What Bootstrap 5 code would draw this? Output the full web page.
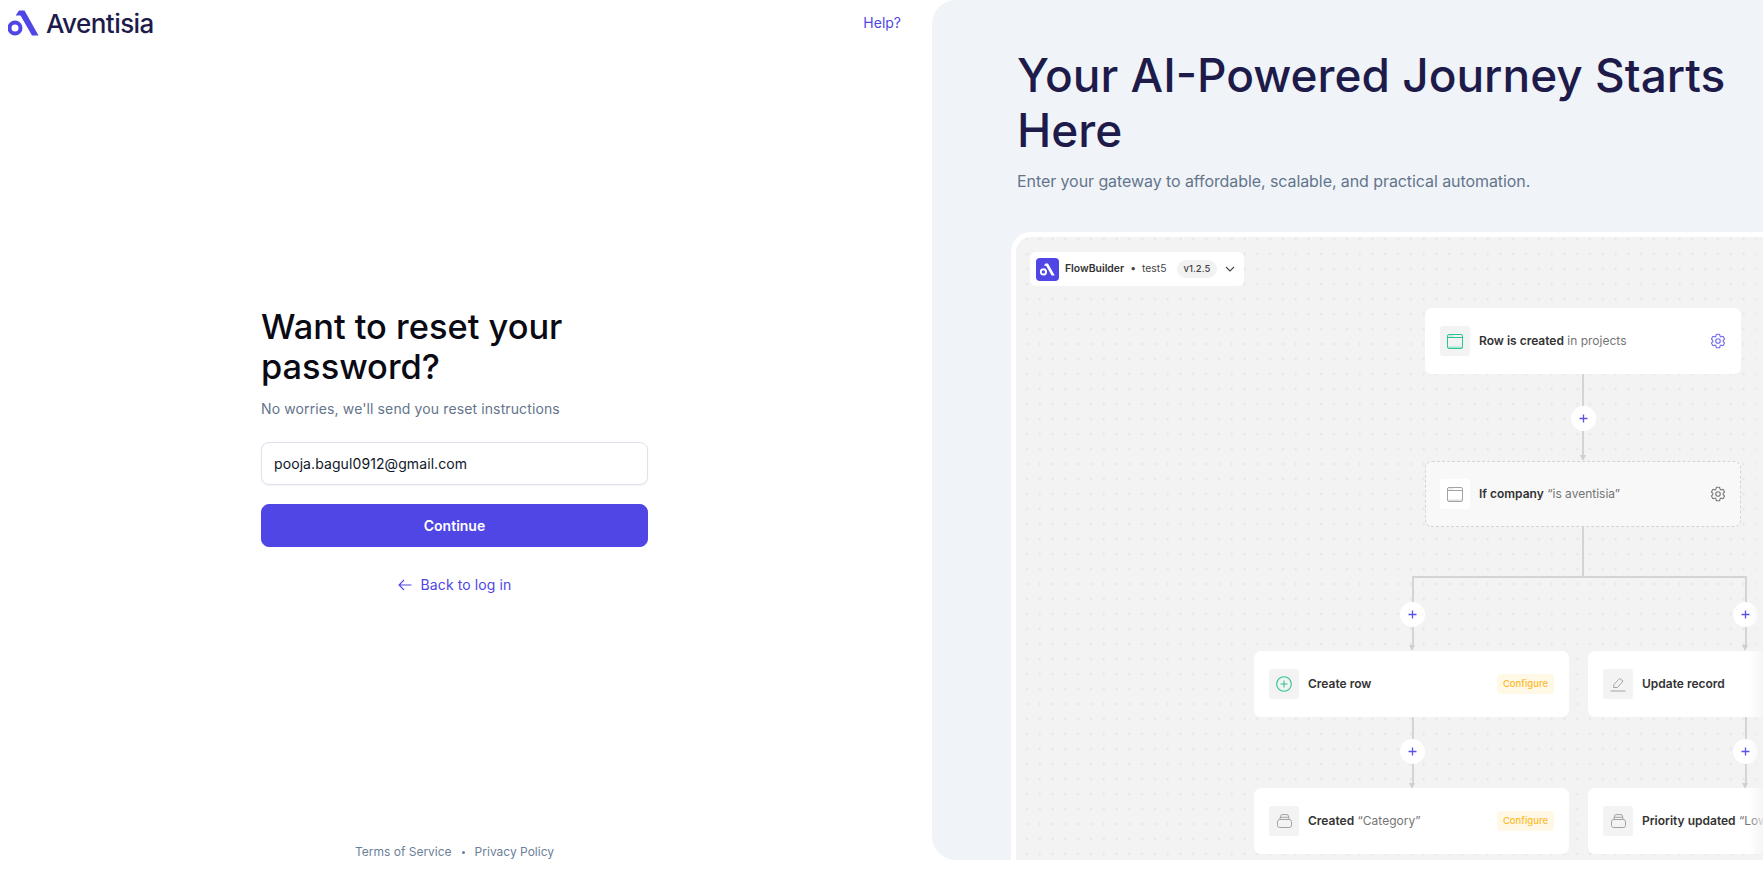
<!DOCTYPE html>
<html lang="en">

<head>
    <meta charset="UTF-8">
    <title>Reset password</title>
    <link href="https://cdn.jsdelivr.net/npm/bootstrap@5.3.3/dist/css/bootstrap.min.css" rel="stylesheet">
    <style>
        html, body {
            height: 872px;
            overflow: hidden;
        }

        body {
            font-family: Inter, "Liberation Sans", sans-serif;
            background: #fff;
        }

        .page-wrap {
            height: 860px;
        }

        .left-side {
            width: 932px;
            flex: none;
        }

        .top-bar {
            height: 46px;
            padding: 10px 31px 0 8px;
        }

        .brand-logo {
            margin-right: 7px;
        }

        .brand-name {
            font-size: 26px;
            line-height: 27px;
            font-weight: 500;
            color: #1e1b4b;
            letter-spacing: -.55px;
        }

        .help-link {
            font-size: 14px;
            line-height: 26px;
            color: #4f46e5;
            text-decoration: none;
        }

        .reset-form {
            width: 387px;
            margin-left: 261px;
            margin-top: 261px;
        }

        .reset-title {
            font-size: 34.4px;
            line-height: 40px;
            font-weight: 450;
            color: #0a0a14;
            margin-bottom: 12px;
        }

        .reset-sub {
            font-size: 14px;
            line-height: 20px;
            letter-spacing: .12px;
            color: #64748b;
            margin-bottom: 23px;
        }

        .reset-form .form-control {
            height: 43px;
            font-size: 14px;
            letter-spacing: .09px;
            padding: 0 12px;
            color: #0f172a;
            border: 1px solid #e0e0ef;
            border-radius: 8px;
            box-shadow: 0 1px 2px rgba(30, 27, 75, .06);
        }

        .btn-continue {
            height: 43px;
            margin-top: 19px;
            font-size: 14px;
            font-weight: 600;
            background: #4f46e5;
            border-color: #4f46e5;
            color: #fff;
            border-radius: 8px;
        }

        .back-link {
            margin-top: 28px;
            font-size: 14px;
            line-height: 20px;
            letter-spacing: .1px;
            color: #4f46e5;
            text-decoration: none;
            gap: 9px;
        }

        .foot-links {
            font-size: 12px;
            line-height: 16px;
            color: #6b7f99;
            gap: 10px;
        }

        .foot-links i {
            width: 3px;
            height: 3px;
            border-radius: 50%;
            background: #6b7f99;
        }

        .right-side {
            flex: 1;
            background: #f0f4f9;
            border-radius: 24px 0 0 24px;
            overflow: hidden;
            padding: 48px 0 0 85px;
        }

        .promo-title {
            font-size: 46px;
            line-height: 55px;
            font-weight: 450;
            color: #1e1b4b;
            margin: 0 0 11px;
        }

        .promo-sub {
            font-size: 16px;
            line-height: 24px;
            letter-spacing: -.08px;
            color: #64748b;
            margin: 0 0 39px;
        }

        .flow-frame {
            position: relative;
            margin-left: -6px;
            height: 640px;
            background-color: #f3f3f3;
            background-image: radial-gradient(#e6e6e6 1px, transparent 1.2px);
            background-size: 12.8px 15px;
            background-position: 4.6px -5.5px;
            border: 5px solid #fff;
            border-right: 0;
            border-bottom: 0;
            border-top-left-radius: 20px;
        }

        /* canvas: items below sit on the diagram at their own place */
        .flow-bar, .flow-node, .flow-line, .flow-plus, .flow-tip {
            position: absolute;
        }

        .flow-bar {
            left: 14px;
            top: 15px;
            width: 214px;
            height: 34px;
            background: #fff;
            border-radius: 6px;
            padding-left: 6px;
            font-size: 10.4px;
            color: #444;
        }

        .flow-bar b {
            font-weight: 600;
            color: #333;
        }

        .flow-logo {
            width: 23px;
            height: 23px;
            border-radius: 4px;
            background: #4f46e5;
            margin-right: 6px;
        }

        .flow-dot {
            margin: 0 6px;
        }

        .flow-ver {
            background: #f2f2f2;
            border-radius: 9px;
            padding: 2px 7px;
            margin-left: 10px;
            font-weight: 500;
            font-size: 9.5px;
        }

        .flow-node {
            width: 315px;
            height: 66px;
            background: #fff;
            border-radius: 7px;
            padding: 0 15px;
            font-size: 12px;
            color: #757575;
        }

        .flow-node b {
            font-weight: 600;
            color: #333;
        }

        .node-dashed {
            background: #f8f8f8;
            border: 1px dashed #d4d4d4;
            padding: 0 14px;
        }

        .node-icon {
            width: 30px;
            height: 30px;
            flex: none;
            background: #f3f3f3;
            border-radius: 3px;
            margin-right: 9px;
            color: #a3a3a3;
        }

        .node-dashed .node-icon {
            background: #fff;
        }

        .icon-green {
            color: #2cc38f;
        }

        .node-gear {
            margin-right: -1px;
        }

        .gear-blue {
            color: #6f68ee;
        }

        .gear-grey {
            color: #777;
        }

        .flow-config {
            background: #fff8e6;
            color: #fdbb2d;
            font-size: 9.5px;
            line-height: 20px;
            font-weight: 500;
            border-radius: 4px;
            padding: 0 6px;
        }

        .flow-line {
            background: #d4d4d4;
        }

        .flow-plus {
            width: 25px;
            height: 25px;
            border-radius: 50%;
            background: #fff;
        }

        .flow-tip {
            width: 0;
            height: 0;
            border: 3.5px solid transparent;
            border-top: 6px solid #cfcfcf;
            border-bottom: 0;
        }

        .flow-fade {
            position: absolute;
            top: 0;
            bottom: 0;
            right: 0;
            width: 14px;
            background: linear-gradient(90deg, rgba(243, 243, 243, 0), rgba(243, 243, 243, .8));
        }

        /* diagram places */
        .line-a { left: 566px; top: 137px; width: 2px; height: 82px; }
        .line-b { left: 566px; top: 290px; width: 2px; height: 50px; }
        .line-c { left: 396px; top: 339px; width: 335px; height: 1.5px; }
        .line-d { left: 396px; top: 339px; width: 1.5px; height: 70px; }
        .line-e { left: 729px; top: 339px; width: 1.5px; height: 70px; }
        .line-f { left: 396px; top: 477px; width: 1.5px; height: 70px; }
        .line-g { left: 729px; top: 477px; width: 1.5px; height: 70px; }
        .tip-a { left: 563.5px; top: 218px; }
        .tip-d { left: 393.2px; top: 408px; }
        .tip-e { left: 726.2px; top: 408px; }
        .tip-f { left: 393.2px; top: 546px; }
        .tip-g { left: 726.2px; top: 546px; }
        .plus-a { left: 554.5px; top: 168.5px; }
        .plus-d { left: 384px; top: 364.5px; }
        .plus-e { left: 717px; top: 364.5px; }
        .plus-f { left: 384px; top: 501.5px; }
        .plus-g { left: 717px; top: 501.5px; }
        .node-a { left: 409px; top: 71px; width: 316px; }
        .node-b { left: 409px; top: 224px; width: 316px; }
        .node-c { left: 238px; top: 414px; }
        .node-d { left: 572px; top: 414px; }
        .node-e { left: 238px; top: 551px; }
        .node-f { left: 572px; top: 551px; }
    </style>
</head>

<body>
    <svg width="0" height="0" class="d-block position-absolute">
        <symbol id="plus" viewBox="0 0 25 25"><path d="M12.5 8.5v8M8.5 12.5h8" stroke="#5b51e8" stroke-width="1.3" fill="none"/></symbol>
        <symbol id="gear" viewBox="0 0 24 24"><path d="M9.594 3.94c.09-.542.56-.94 1.11-.94h2.593c.55 0 1.02.398 1.11.94l.213 1.281c.063.374.313.686.645.87.074.04.147.083.22.127.324.196.72.257 1.075.124l1.217-.456a1.125 1.125 0 011.37.49l1.296 2.247a1.125 1.125 0 01-.26 1.431l-1.003.827c-.293.24-.438.613-.431.992a6.759 6.759 0 010 .255c-.007.378.138.75.43.99l1.005.828c.424.35.534.954.26 1.43l-1.298 2.247a1.125 1.125 0 01-1.369.491l-1.217-.456c-.355-.133-.75-.072-1.076.124a6.57 6.57 0 01-.22.128c-.331.183-.581.495-.644.869l-.213 1.28c-.09.543-.56.941-1.11.941h-2.594c-.55 0-1.02-.398-1.11-.94l-.213-1.281c-.062-.374-.312-.686-.644-.87a6.52 6.52 0 01-.22-.127c-.325-.196-.72-.257-1.076-.124l-1.217.456a1.125 1.125 0 01-1.369-.49l-1.297-2.247a1.125 1.125 0 01.26-1.431l1.004-.827c.292-.24.437-.613.43-.992a6.932 6.932 0 010-.255c.007-.378-.138-.75-.43-.99l-1.004-.828a1.125 1.125 0 01-.26-1.43l1.297-2.247a1.125 1.125 0 011.37-.491l1.216.456c.356.133.751.072 1.076-.124.072-.044.146-.087.22-.128.332-.183.582-.495.644-.869l.214-1.281z" fill="none" stroke="currentColor" stroke-width="1.5" stroke-linejoin="round"/><circle cx="12" cy="12" r="3" fill="none" stroke="currentColor" stroke-width="1.5"/></symbol>
        <symbol id="window" viewBox="0 0 16 15"><path d="M1 12.5h14v1.5H1z" fill="currentColor" opacity=".35"/><rect x=".5" y=".5" width="15" height="14" rx="1.5" fill="none" stroke="currentColor"/><path d="M.5 3.5h15" stroke="currentColor"/><path d="M2 2h.8M3.6 2h.8M5.2 2h.8" stroke="currentColor" stroke-width=".7"/></symbol>
        <symbol id="stack" viewBox="0 0 15 14"><rect x=".5" y="5.5" width="14" height="8" rx="2.2" fill="none" stroke="currentColor"/><path d="M2.8 5.5 3.6 1.8A1.5 1.5 0 0 1 5 .6h5a1.5 1.5 0 0 1 1.4 1.200l.8 3.700M3.300 3.300h8.400" fill="none" stroke="currentColor"/></symbol>
    </svg>

    <div class="page-wrap d-flex">
        <div class="left-side d-flex flex-column">
            <div class="top-bar d-flex justify-content-between">
                <div class="d-flex align-items-start">
                    <svg class="brand-logo" width="31" height="26" viewBox="0 0 31 26"><path d="M8 5 11 .5h5.500L30.500 25.500H24L12.500 5.500H8z" fill="#4f46e5"/><circle cx="7" cy="18" r="5.500" fill="none" stroke="#4f46e5" stroke-width="4"/></svg>
                    <span class="brand-name">Aventisia</span>
                </div>
                <a class="help-link" href="#">Help?</a>
            </div>

            <div class="reset-form d-flex flex-column flex-grow-1">
                <h1 class="reset-title">Want to reset your password?</h1>
                <p class="reset-sub">No worries, we'll send you reset instructions</p>
                <input type="email" class="form-control" value="pooja.bagul0912@gmail.com">
                <button class="btn btn-continue w-100">Continue</button>
                <a class="back-link d-flex justify-content-center align-items-center" href="#">
                    <svg width="14" height="12" viewBox="0 0 14 12"><path d="M13.500 6H1M6 1 1 6l5 5" fill="none" stroke="#4f46e5" stroke-width="1.100"/></svg>
                    Back to log in
                </a>
                <div class="foot-links d-flex justify-content-center align-items-center mt-auto">
                    <span>Terms of Service</span><i></i><span>Privacy Policy</span>
                </div>
            </div>
        </div>

        <div class="right-side">
            <h2 class="promo-title">Your AI-Powered Journey Starts Here</h2>
            <p class="promo-sub">Enter your gateway to affordable, scalable, and practical automation.</p>

            <div class="flow-frame">
                <div class="flow-bar d-flex align-items-center">
                    <span class="flow-logo d-flex align-items-center justify-content-center">
                        <svg width="15" height="13" viewBox="0 0 31 26"><path d="M8 5 11 .5h5.500L30.500 25.500H24L12.500 5.500H8z" fill="#fff"/><circle cx="7" cy="18" r="5.500" fill="none" stroke="#fff" stroke-width="4"/></svg>
                    </span>
                    <b>FlowBuilder</b><span class="flow-dot">•</span><span>test5</span>
                    <span class="flow-ver">v1.2.5</span>
                    <svg class="ms-2" width="10" height="6" viewBox="0 0 10 6"><path d="M1 1l4 4 4-4" fill="none" stroke="#444" stroke-width="1.100"/></svg>
                </div>

                <div class="flow-line line-a"></div>
                <div class="flow-tip tip-a"></div>
                <div class="flow-line line-b"></div>
                <div class="flow-line line-c"></div>
                <div class="flow-line line-d"></div>
                <div class="flow-line line-e"></div>
                <div class="flow-tip tip-d"></div>
                <div class="flow-tip tip-e"></div>
                <div class="flow-line line-f"></div>
                <div class="flow-line line-g"></div>
                <div class="flow-tip tip-f"></div>
                <div class="flow-tip tip-g"></div>

                <div class="flow-plus plus-a"><svg width="25" height="25" class="d-block"><use href="#plus"/></svg></div>
                <div class="flow-plus plus-d"><svg width="25" height="25" class="d-block"><use href="#plus"/></svg></div>
                <div class="flow-plus plus-e"><svg width="25" height="25" class="d-block"><use href="#plus"/></svg></div>
                <div class="flow-plus plus-f"><svg width="25" height="25" class="d-block"><use href="#plus"/></svg></div>
                <div class="flow-plus plus-g"><svg width="25" height="25" class="d-block"><use href="#plus"/></svg></div>

                <div class="flow-node node-a d-flex align-items-center">
                    <span class="node-icon d-flex align-items-center justify-content-center"><svg width="16" height="15" class="icon-green"><use href="#window"/></svg></span>
                    <span><b>Row is created</b> in projects</span>
                    <svg class="ms-auto node-gear gear-blue" width="18" height="18"><use href="#gear"/></svg>
                </div>
                <div class="flow-node node-b node-dashed d-flex align-items-center">
                    <span class="node-icon d-flex align-items-center justify-content-center"><svg width="16" height="15"><use href="#window"/></svg></span>
                    <span><b>If company</b> “is aventisia”</span>
                    <svg class="ms-auto node-gear gear-grey" width="18" height="18"><use href="#gear"/></svg>
                </div>
                <div class="flow-node node-c d-flex align-items-center">
                    <span class="node-icon d-flex align-items-center justify-content-center">
                        <svg width="16" height="16" viewBox="0 0 16 16"><circle cx="8" cy="8" r="7.300" fill="none" stroke="#2cc38f" stroke-width="1.100"/><path d="M8 4.500v7M4.500 8h7" stroke="#2cc38f" stroke-width="1.100"/></svg>
                    </span>
                    <span><b>Create row</b></span>
                    <span class="flow-config ms-auto">Configure</span>
                </div>
                <div class="flow-node node-d d-flex align-items-center">
                    <span class="node-icon d-flex align-items-center justify-content-center">
                        <svg width="16" height="15" viewBox="0 0 16 15"><path d="M3.500 10.500 4 7.500 9.500 1.500 13 4 7.500 10.500zM.5 14h15" fill="none" stroke="#a3a3a3"/></svg>
                    </span>
                    <span><b>Update record</b></span>
                </div>
                <div class="flow-node node-e d-flex align-items-center">
                    <span class="node-icon d-flex align-items-center justify-content-center"><svg width="15" height="14"><use href="#stack"/></svg></span>
                    <span><b>Created</b> “Category”</span>
                    <span class="flow-config ms-auto">Configure</span>
                </div>
                <div class="flow-node node-f d-flex align-items-center">
                    <span class="node-icon d-flex align-items-center justify-content-center"><svg width="15" height="14"><use href="#stack"/></svg></span>
                    <span class="text-nowrap"><b>Priority updated</b> “Low”</span>
                </div>
                <div class="flow-fade"></div>
            </div>
        </div>
    </div>
</body>

</html>
